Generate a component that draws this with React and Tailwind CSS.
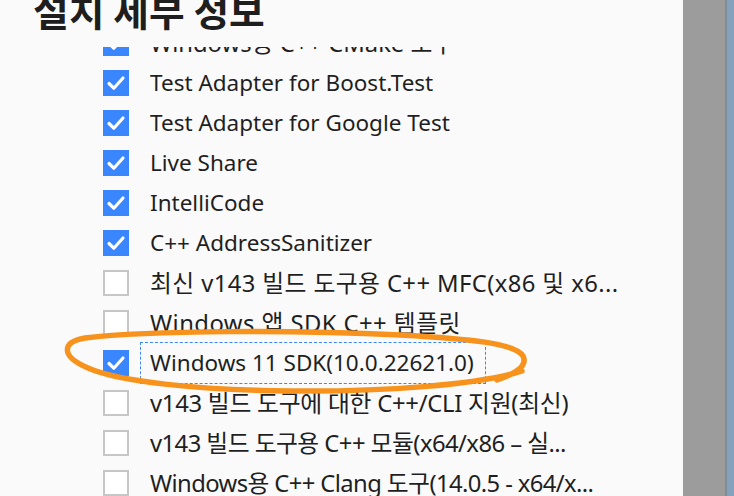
import React from "react";

const items = [
  { label: "Windows용 C++ CMake 도구", checked: true, track: "tracking-[0px]" },
  { label: "Test Adapter for Boost.Test", checked: true },
  { label: "Test Adapter for Google Test", checked: true },
  { label: "Live Share", checked: true },
  { label: "IntelliCode", checked: true },
  { label: "C++ AddressSanitizer", checked: true },
  { label: "최신 v143 빌드 도구용 C++ MFC(x86 및 x6...", checked: false, track: "tracking-[0.4px]" },
  { label: "Windows 앱 SDK C++ 템플릿", checked: false, track: "tracking-[0.45px]" },
  { label: "Windows 11 SDK(10.0.22621.0)", checked: true, focused: true },
  { label: "v143 빌드 도구에 대한 C++/CLI 지원(최신)", checked: false, track: "tracking-[-0.25px]" },
  { label: "v143 빌드 도구용 C++ 모듈(x64/x86 – 실...", checked: false, track: "tracking-[-0.55px]" },
  { label: "Windows용 C++ Clang 도구(14.0.5 - x64/x...", checked: false, track: "tracking-[-0.6px]" },
];

function CheckBox({ checked }) {
  if (!checked) {
    return <div className="w-[26px] h-[26px] shrink-0 border-2 border-[#c6c6c6] bg-white" />;
  }
  return (
    <div className="w-[26px] h-[26px] shrink-0 bg-[#3a86ff] flex items-center justify-center">
      <svg width="26" height="26" viewBox="0 0 26 26">
        <path d="M6 13.5 L10.8 18.2 L20 8" fill="none" stroke="white" strokeWidth="3.2" strokeLinecap="round" strokeLinejoin="round" />
      </svg>
    </div>
  );
}

function Row({ label, checked, focused, track }) {
  const size = track ? `text-[23.8px] ${track}` : "text-[22.5px]";
  return (
    <div className="h-10 flex items-center">
      <div className="w-[103px] shrink-0" />
      <CheckBox checked={checked} />
      <div className="ml-[11px]">
        <span
          className={`block whitespace-nowrap pl-[9px] pr-[11px] py-[4px] leading-[32px] border ${size} ${focused ? "border-dashed border-[#3a86ff]" : "border-transparent"}`}
        >
          {label}
        </span>
      </div>
    </div>
  );
}

export default function App() {
  return (
    <div
      className="relative w-[734px] h-[496px] overflow-hidden bg-[#fafafa] flex text-[#1f1f1f]"
      style={{ fontFamily: '"Segoe UI", "Noto Sans", "Noto Sans CJK KR", sans-serif' }}
    >
      <div className="flex-1 flex flex-col min-w-0">
        <h1
          className="ml-[33px] mt-[-13px] text-[38.8px] leading-[44px] font-bold text-[#1e1e1e] whitespace-nowrap"
          style={{ fontFamily: '"Noto Sans CJK KR", sans-serif' }}
        >
          설치 세부 정보
        </h1>
        <div className="mt-[16px] flex-1 overflow-hidden">
          <div className="mt-[-24px]">
            {items.map((it) => (
              <Row key={it.label} {...it} />
            ))}
          </div>
        </div>
      </div>
      <div className="w-[42px] shrink-0 bg-[#9c9c9c]" />
      <div className="w-[2px] shrink-0 bg-[#7d8c99]" />
      <div className="w-[7px] shrink-0 bg-[#86a2ba]" />

      <svg className="absolute inset-0 pointer-events-none" width="734" height="496">
        <path
          d="M522 371 C480 385, 380 392, 290 391 C200 390, 120 382, 88 368 C60 356, 62 342, 85 338 C150 330, 300 330, 400 335 C470 339, 515 343, 523 356 C528 366, 515 374, 497 380"
          fill="none"
          stroke="#f7931d"
          strokeWidth="5.5"
          strokeLinecap="round"
          strokeLinejoin="round"
        />
      </svg>
    </div>
  );
}
